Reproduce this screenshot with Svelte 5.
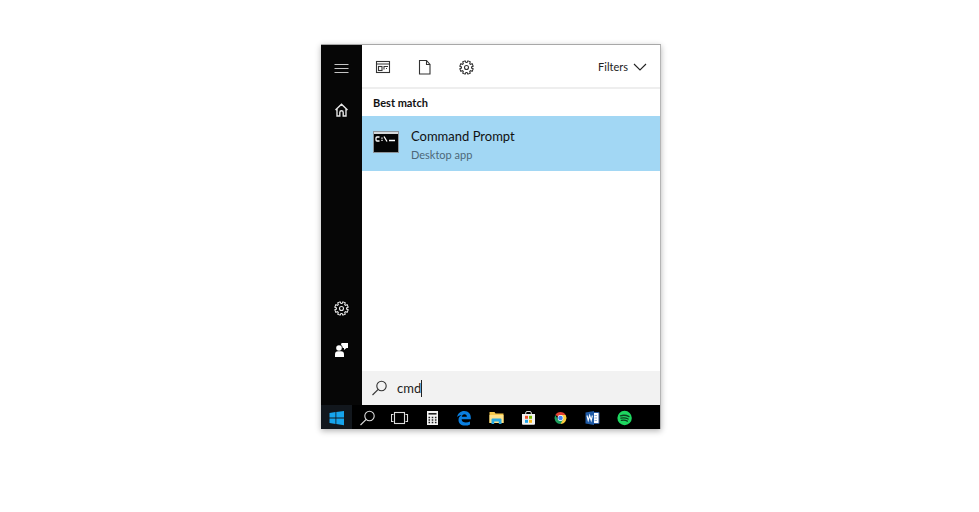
<script lang="ts">
  let query = $state('cmd');

  // outline of a cog with alternating outer and inner corners
  const cog = (teeth: number, outer: number, inner: number) => {
    const step = (Math.PI * 2) / teeth;
    const points: string[] = [];
    for (let i = 0; i < teeth; i++) {
      const a = i * step + step / 2;
      for (const [offset, r] of [
        [-0.24, outer],
        [0.24, outer],
        [0.36, inner],
        [0.64, inner],
      ]) {
        const t = a + offset * step;
        points.push(
          `${(7.5 + r * Math.cos(t)).toFixed(2)},${(8.5 + r * Math.sin(t)).toFixed(2)}`
        );
      }
    }
    return points.join(' ');
  };

  const cogPoints = cog(8, 6.8, 5.1);
</script>

{#snippet gear()}
  <svg class="line" viewBox="0 0 16 16" aria-hidden="true">
    <polygon points={cogPoints} />
    <circle cx="7.5" cy="8.5" r="2" />
  </svg>
{/snippet}

{#snippet magnifier()}
  <svg class="line" viewBox="0 0 16 16" aria-hidden="true">
    <circle cx="9.5" cy="6" r="4.7" />
    <path d="M6.2 9.3 L0.5 15" />
  </svg>
{/snippet}

<main>
  <div class="desktop">
    <div class="start">
      <nav class="rail" aria-label="Start">
        <button aria-label="Expand">
          <svg class="line bars" viewBox="0 0 16 16" aria-hidden="true">
            <path d="M0.5 4.5h14M0.5 8.5h14M0.5 12.5h14" />
          </svg>
        </button>
        <button aria-label="Home">
          <svg class="line house" viewBox="0 0 16 16" aria-hidden="true">
            <path d="M1.5 8 L7.5 2.2 L13.5 8 M3 7 V14 H5.8 V10.5 Q5.8 8.8 7.5 8.8 T9.2 10.5 V14 H12 V7" />
          </svg>
        </button>
        <span class="spacer"></span>
        <button aria-label="Settings">{@render gear()}</button>
        <button aria-label="Feedback">
          <svg viewBox="0 0 16 16" fill="#fff" aria-hidden="true">
            <path d="M7.5 1H14v5h-1.5L10 8V6H8.8Q8.5 3.5 7 3Z" />
            <circle cx="5" cy="6" r="2.8" />
            <path d="M1 15v-2.5Q1 9.3 4 9.3h3Q10 9.3 10 12.5V15Z" />
          </svg>
        </button>
      </nav>

      <div class="content">
        <header>
          <button aria-label="Apps">
            <svg class="line" viewBox="0 0 16 16" aria-hidden="true">
              <rect x="1.5" y="2.5" width="13" height="11" />
              <path d="M1.5 5h13M8.5 7.5h4.5M9 7.5v3M11 9.5h1" />
              <rect x="3.5" y="7.5" width="3.5" height="4" />
            </svg>
          </button>
          <button aria-label="Documents">
            <svg class="line" viewBox="0 0 16 16" aria-hidden="true">
              <path d="M2.5 1.5h7l3.5 4v9.5h-10.5zM9.5 1.5v4h4" />
            </svg>
          </button>
          <button aria-label="Settings results">{@render gear()}</button>
          <button class="filters">
            Filters
            <svg class="line" viewBox="0 0 14 8" aria-hidden="true">
              <path d="M1 1 L7 7 L13 1" />
            </svg>
          </button>
        </header>

        <h2>Best match</h2>
        <a class="result" href="#command-prompt">
          <svg viewBox="0 0 26 22" aria-hidden="true">
            <rect width="26" height="22" fill="#8d9398" />
            <rect x="1" y="1" width="24" height="2" fill="#d5d8da" />
            <rect x="1" y="3" width="24" height="18" fill="#050505" />
            <path
              d="M6.5 6H4Q3 6 3 7v2Q3 10 4 10h2.5M9 6.5v1.2M9 8.8v1.2M11 5.5l3 5M16 9.5h6"
              fill="none"
              stroke="#fff"
              stroke-width="1.3"
            />
          </svg>
          <span class="label">
            <span class="name">Command Prompt</span>
            <span class="kind">Desktop app</span>
          </span>
        </a>

        <label class="search">
          {@render magnifier()}
          <input type="text" aria-label="Search" bind:value={query} />
          <span class="caret"></span>
        </label>
      </div>
    </div>

    <footer>
      <button class="active" aria-label="Start menu">
        <svg viewBox="0 0 16 16" fill="#16a5ee" aria-hidden="true">
          <path d="M0.5 3 L6.5 2.1V7.6H0.5zM7.3 2 L15 1V7.6H7.3zM0.5 8.4H6.5V14L0.5 13.1zM7.3 8.4h7.7V15.2L7.3 14.1z" />
        </svg>
      </button>
      <button aria-label="Search Windows">{@render magnifier()}</button>
      <button aria-label="Task view">
        <svg class="line wide" viewBox="0 0 18 16" aria-hidden="true">
          <rect x="3.5" y="2.5" width="10" height="11" />
          <path d="M2.5 4.5H0.5v7h2M14.5 4.5h2v7h-2" />
        </svg>
      </button>
      <button aria-label="Calculator">
        <svg viewBox="0 0 16 16" aria-hidden="true">
          <rect x="3" y="1" width="11" height="14" fill="#f4f4f4" />
          <path d="M4.5 3.8h8" stroke="#222" stroke-width="1.6" />
          <path
            d="M4.5 7.5h8M4.5 10h8M4.5 12.5h8"
            stroke="#222"
            stroke-width="1.3"
            stroke-dasharray="1.6"
          />
        </svg>
      </button>
      <button aria-label="Edge">
        <svg viewBox="0 0 16 16" fill="#0a7fe0" aria-hidden="true">
          <path d="M1.2 7.2C1.8 3.3 4.6 1 8.2 1c4.4 0 6.6 3 6.6 6.7v1.5H5.6c.1 2.2 1.9 3.3 4.2 3.3 1.6 0 3-.4 4.2-1.1v3c-1.4.8-3.1 1.2-5 1.2-4 0-6.5-2.2-6.5-5.6 0-2.2 1.2-3.9 3.1-4.9-2 .3-3.4 1-4.4 2.1zM5.8 6.7h5.1c0-1.6-.9-2.5-2.4-2.5S6 5.2 5.8 6.7z" />
        </svg>
      </button>
      <button aria-label="File Explorer">
        <svg viewBox="0 0 16 16" aria-hidden="true">
          <path d="M1.5 2h5l1 1.5h8V13h-14z" fill="#f5c84c" />
          <path d="M1.5 5h14v8h-14z" fill="#ffe28a" />
          <path d="M3.5 14V9.5q0-1 1-1h8q1 0 1 1V14h-2.7v-2.5H6.2V14z" fill="#29a9e1" />
        </svg>
      </button>
      <button aria-label="Store">
        <svg viewBox="0 0 16 16" aria-hidden="true">
          <path d="M5.7 5V3Q5.7 1.5 7 1.5h3q1.3 0 1.3 1.5v2" fill="none" stroke="#ddd" />
          <path d="M2 4h13v9.8q0 1-1 1h-11q-1 0-1-1z" fill="#f2f2f2" />
          <path d="M5 5.8h3v3h-3z" fill="#f0512c" />
          <path d="M9 5.8h3v3h-3z" fill="#77b900" />
          <path d="M5 9.8h3v3h-3z" fill="#1ba1e8" />
          <path d="M9 9.8h3v3h-3z" fill="#fcb714" />
        </svg>
      </button>
      <button aria-label="Chrome">
        <svg viewBox="0 0 16 16" aria-hidden="true">
          <path d="M8.5 8 L3.3 5 A6 6 0 0 1 13.7 5z" fill="#e34133" />
          <path d="M8.5 8 V5h5.2A6 6 0 0 1 8.5 14z" fill="#fdce3f" />
          <path d="M8.5 8 L11.1 9.5 L8.5 14A6 6 0 0 1 3.3 5L5.9 9.5z" fill="#1da15f" />
          <circle cx="8.5" cy="8" r="2.9" fill="#fff" />
          <circle cx="8.5" cy="8" r="2.3" fill="#4284f3" />
        </svg>
      </button>
      <button aria-label="Word">
        <svg viewBox="0 0 16 16" aria-hidden="true">
          <path d="M8.5 2.5H15v11H8.5z" fill="#fff" stroke="#2b579a" />
          <path d="M10.5 5.5H13M10.5 8H13M10.5 10.5H13" stroke="#7b9bc8" stroke-width=".8" />
          <path d="M1.5 2.5 L10 1v14L1.5 13.5z" fill="#1e5aa6" />
          <path d="M3 5.5l1.2 5 1.5-5 1.5 5 1.2-5" fill="none" stroke="#fff" stroke-width="1.1" />
        </svg>
      </button>
      <button aria-label="Spotify">
        <svg viewBox="0 0 16 16" aria-hidden="true">
          <circle cx="8.6" cy="8" r="7.2" fill="#1ed760" />
          <path
            d="M4.4 5.8Q8.9 4.4 13 6.6M4.9 8.2Q8.8 7.1 12.2 9M5.4 10.4Q8.6 9.6 11.4 11.1"
            fill="none"
            stroke="#0b3f1e"
            stroke-width="1.3"
            stroke-linecap="round"
          />
        </svg>
      </button>
    </footer>
  </div>
</main>

<style>
  :global(body) {
    margin: 0;
    background: #fff;
  }

  main {
    box-sizing: border-box;
    display: flex;
    justify-content: center;
    min-height: 100vh;
    padding: 44px 16px 83px 19px;
    font-family: Lato, 'Open Sans', sans-serif;
    color: #111;
  }

  .desktop {
    box-sizing: border-box;
    display: flex;
    flex-direction: column;
    width: 100%;
    max-width: 340px;
    border-top: 1px solid #a8a8a8;
    border-right: 1px solid #b4b4b4;
    box-shadow: 0 2px 6px rgba(0, 0, 0, 0.3);
  }

  button {
    display: flex;
    align-items: center;
    justify-content: center;
    margin: 0;
    padding: 0;
    border: 0;
    background: none;
    color: inherit;
    font: inherit;
    cursor: pointer;
  }

  svg {
    display: block;
    flex: none;
    width: 16px;
    height: 16px;
  }
  .line {
    fill: none;
    stroke: currentColor;
    stroke-width: 1.1px;
  }

  .start {
    flex: 1;
    display: flex;
  }

  .rail {
    display: flex;
    flex-direction: column;
    flex: none;
    width: 41px;
    padding: 2px 0 34px;
    background: #060606;
    color: #e6e6e6;
  }
  .rail button {
    height: 42px;
  }
  .rail .bars {
    color: #c4c4c4;
  }
  .rail .house {
    stroke-width: 1.4px;
  }
  .spacer {
    flex: 1;
  }

  .content {
    flex: 1;
    display: flex;
    flex-direction: column;
    min-width: 0;
    background: #fff;
  }

  header {
    display: flex;
    height: 41px;
    padding-top: 1px;
    border-bottom: 2px solid #eee;
    color: #333;
  }
  header button {
    width: 42px;
  }
  header .filters {
    gap: 5px;
    width: auto;
    margin-left: auto;
    padding-right: 13px;
    font-size: 11px;
    color: #222;
  }
  .filters svg {
    width: 14px;
    height: 8px;
  }

  h2 {
    margin: 0;
    padding: 0 11px;
    font-size: 11px;
    font-weight: 700;
    line-height: 27px;
  }

  .result {
    display: flex;
    align-items: flex-start;
    gap: 12px;
    padding: 10px 11px 7px;
    background: #a2d7f4;
    color: inherit;
    text-decoration: none;
  }
  .result svg {
    width: 26px;
    height: 22px;
    margin-top: 5px;
  }
  .label {
    display: flex;
    flex-direction: column;
  }
  .name {
    font-size: 13px;
    line-height: 20px;
  }
  .kind {
    font-size: 11px;
    line-height: 18px;
    color: #4d6878;
  }

  .search {
    display: flex;
    align-items: center;
    height: 34px;
    margin-top: auto;
    padding: 0 10px;
    background: #f2f2f2;
    color: #333;
  }
  .search input {
    field-sizing: content;
    min-width: 0;
    margin-left: 9px;
    padding: 0;
    border: 0;
    outline: 0;
    background: none;
    color: #222;
    font: inherit;
    font-size: 13px;
    caret-color: transparent;
  }
  .caret {
    width: 1px;
    height: 17px;
    background: #222;
  }

  footer {
    display: flex;
    height: 24px;
    background: #000;
    color: #ddd;
  }
  footer button {
    flex: 0 1 32px;
    padding-top: 2px;
  }
  footer .active {
    flex-basis: 31px;
    background: #12171d;
  }
  footer .wide {
    width: 18px;
  }
</style>
